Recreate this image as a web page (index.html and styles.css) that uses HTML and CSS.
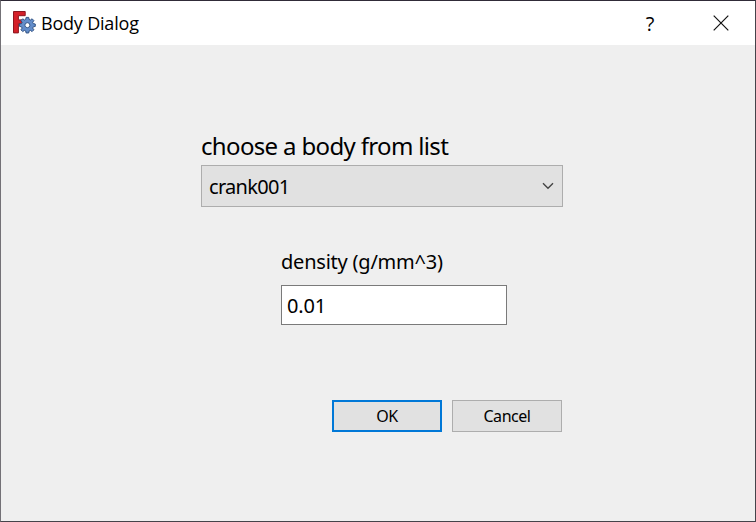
FILE: index.html
```html
<!DOCTYPE html>
<html lang="en">
<head>
<meta charset="utf-8">
<title>Body Dialog</title>
<link rel="stylesheet" href="styles.css">
</head>
<body>
<main class="window">
  <header class="titlebar">
    <svg class="app-icon" viewBox="0 0 24 24" aria-hidden="true">
      <path d="M1.5 .5h11.7v4.2H6.4v4.2h4.4v3.7H6.4v9.3H1.5z" fill="#d42029" stroke="#8b1720"/>
      <g transform="translate(15.4 13.8)" fill="#638dca" stroke="#294b7c" stroke-width=".9">
        <path d="M-1.3-7.4h2.6l.4 2 1.3.6 1.7-1.2 1.8 1.8-1.2 1.7.6 1.3 2 .4v2.4l-2 .4-.6 1.3 1.2 1.7-1.8 1.8-1.7-1.2-1.3.6-.4 2h-2.6l-.4-2-1.3-.6-1.7 1.2-1.8-1.8 1.2-1.7-.6-1.3-2-.4v-2.4l2-.4.6-1.3-1.2-1.7 1.8-1.8 1.7 1.2 1.3-.6z"/>
        <circle cy=".4" r="2.5" fill="#fff"/>
      </g>
    </svg>
    <h1 class="title">Body Dialog</h1>
    <button class="caption-button help" aria-label="Help">?</button>
    <button class="caption-button" aria-label="Close">
      <svg class="close-icon" viewBox="0 0 16 16" aria-hidden="true"><path d="M.7.7l14.6 14.6M15.3.7L.7 15.3"/></svg>
    </button>
  </header>
  <form class="content">
    <label class="body-label" for="body">choose a body from list</label>
    <button class="combo" id="body" type="button"><span>crank001</span>
      <svg class="chevron" viewBox="0 0 12 8" aria-hidden="true"><path d="M1 1.2l5 5 5-5"/></svg>
    </button>
    <div class="density">
      <label class="density-label" for="density">density (g/mm^3)</label>
      <input class="density-input" id="density" type="text" value="0.01">
    </div>
    <div class="actions">
      <button class="button primary" type="button">OK</button>
      <button class="button" type="button">Cancel</button>
    </div>
  </form>
</main>
</body>
</html>
```
FILE: styles.css
```css
* { box-sizing: border-box; }
body { margin: 0; }
button, input { margin: 0; padding: 0; color: #000; font-family: inherit; border-radius: 0; }
.window {
  width: 756px;
  height: 522px;
  border: 1px solid #45434a;
  border-left-color: #737176;
  border-top-color: #302b38;
  background: #efefef;
  color: #000;
  font-family: "Noto Sans", sans-serif;
}
.titlebar { display: flex; align-items: center; height: 44px; padding-left: 11px; background: #fff; }
.app-icon { width: 24px; height: 24px; flex: none; }
.title {
  margin: 0 auto 0 5px;
  font-family: "Open Sans", sans-serif;
  font-size: 18px;
  font-weight: 400;
  line-height: 24px;
  letter-spacing: -.2px;
}
.caption-button { display: flex; align-items: center; justify-content: center; width: 70px; height: 44px; border: 0; background: none; }
.help { font-family: "Open Sans", sans-serif; font-size: 20px; }
.close-icon { width: 16px; height: 16px; margin-left: 1px; fill: none; stroke: #111; stroke-width: 1.2; }
.content { display: flex; flex-direction: column; width: 362px; margin-left: 200px; padding-top: 84px; }
.body-label { height: 36px; font-size: 24px; line-height: 34px; letter-spacing: -.66px; white-space: nowrap; }
.combo {
  display: flex; align-items: center; justify-content: space-between;
  height: 42px; padding: 0 8px 0 7px;
  border: 1px solid #adadad; background: #e1e1e1; font-size: 20px; letter-spacing: -.7px;
}
.chevron { width: 12px; height: 8px; fill: none; stroke: #444; stroke-width: 1.4; }
.density { display: flex; flex-direction: column; width: 226px; margin: 40px 0 0 80px; }
.density-label { height: 38px; font-size: 20px; line-height: 29px; letter-spacing: -.22px; white-space: nowrap; }
.density-input { height: 40px; padding: 0 5px; border: 1px solid #7a7a7a; background: #fff; font-size: 20px; letter-spacing: -.2px; }
.actions { display: flex; justify-content: flex-end; gap: 10px; margin: 75px 1px 0 0; }
.button { width: 110px; height: 32px; padding-bottom: 1px; border: 1px solid #adadad; background: #e1e1e1; font-size: 16px; letter-spacing: -.45px; }
.primary { border: 2px solid #0078d7; }
```
